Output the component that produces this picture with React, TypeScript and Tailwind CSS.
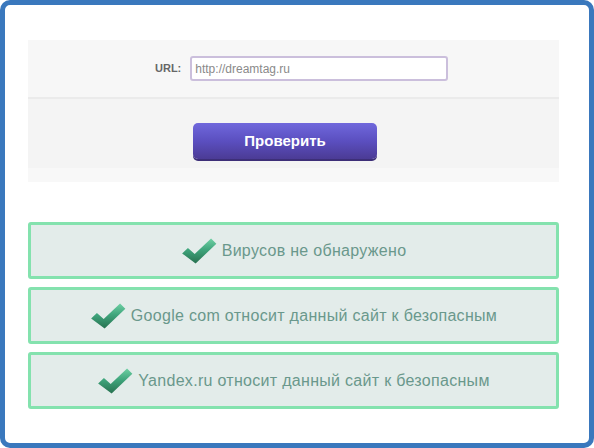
import type { JSX } from "react";

const RESULTS = [
  "Вирусов не обнаружено",
  "Google com относит данный сайт к безопасным",
  "Yandex.ru относит данный сайт к безопасным",
];

function CheckIcon({ id }: { id: string }): JSX.Element {
  return (
    <svg width="36" height="27" viewBox="0 0 37 28" className="shrink-0">
      <defs>
        <linearGradient id={id} x1="0" y1="0" x2="0" y2="1">
          <stop offset="0" stopColor="#6fd0a4" />
          <stop offset="0.45" stopColor="#3fa57c" />
          <stop offset="1" stopColor="#277150" />
        </linearGradient>
      </defs>
      <path d="M1 17 L7 11.5 L14 17.5 L31 1.5 L36.5 7 L15 27.5 Z" fill={`url(#${id})`} />
    </svg>
  );
}

export default function App(): JSX.Element {
  return (
    <div
      className="h-[448px] w-[594px] rounded-[10px] border-[5px] border-[#3a78bd] bg-white pl-[23px] pt-[35px]"
      style={{ fontFamily: '"Liberation Sans", Arial, sans-serif' }}
    >
      <section className="w-[531px] bg-[#f4f4f4]">
        <div className="flex h-[57px] items-center bg-[#f7f7f7] pl-[127px]">
          <label className="mr-[9px] text-[11px] font-bold text-[#666666]" htmlFor="url">
            URL:
          </label>
          <input
            id="url"
            className="h-[25px] w-[258px] rounded-[3px] border-2 border-[#cbbfdc] bg-white px-[3px] text-[12px] text-[#8a8a8a] outline-none"
            defaultValue="http://dreamtag.ru"
          />
        </div>
        <div className="h-[2px] bg-[#ebebeb]" />
        <div className="h-[69px] pl-[165px] pt-[24px]">
          <button
            className="h-[36px] w-[184px] rounded-[5px] bg-gradient-to-b from-[#7068dc] via-[#5b4fc0] to-[#4b3b95] text-[15px] font-bold text-white shadow-[0_2px_0_#3d2f78]"
            type="button"
          >
            Проверить
          </button>
        </div>
        <div className="h-[14px] bg-[#f8f8f8]" />
      </section>

      <div className="mt-[40px] flex w-[531px] flex-col gap-[8px]">
        {RESULTS.map((text, i) => (
          <div
            key={text}
            className="flex h-[57px] items-center justify-center gap-[5px] rounded-[3px] border-[3px] border-[#84e2ae] bg-[#e3ecea]"
          >
            <CheckIcon id={`chk${i}`} />
            <span className="text-[16px] tracking-[0.3px] text-[#6a988c]">{text}</span>
          </div>
        ))}
      </div>
    </div>
  );
}
